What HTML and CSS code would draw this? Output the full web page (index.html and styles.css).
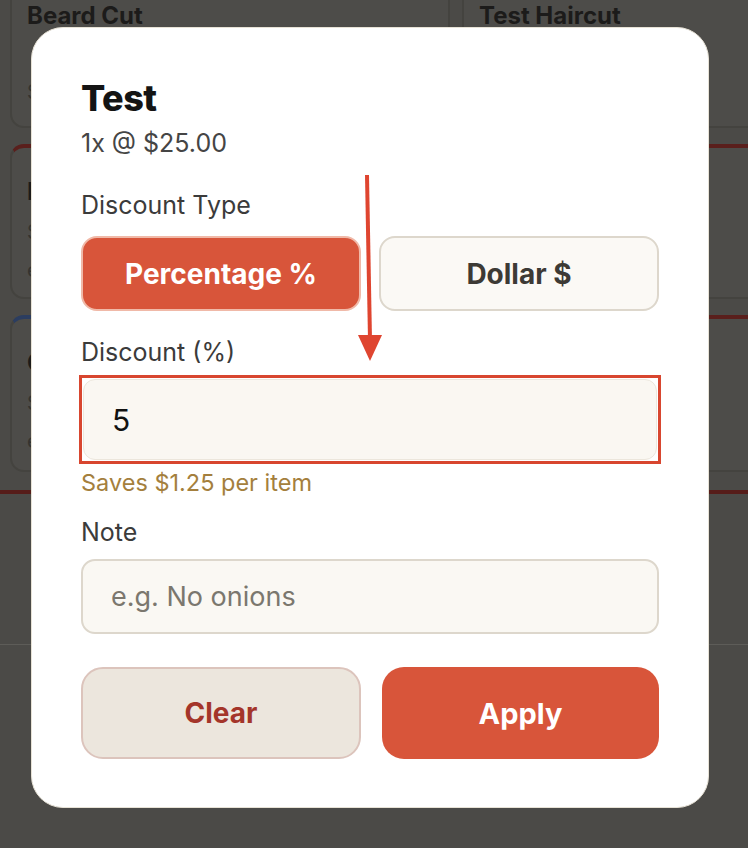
FILE: index.html
```html
<!DOCTYPE html>
<html lang="en">
<head>
<meta charset="utf-8">
<title>Discount</title>
<link rel="stylesheet" href="styles.css">
</head>
<body>
<div class="bg">
  <div class="grid">
    <div class="card first"><div class="card-name">Beard Cut</div><div class="card-line">$30</div></div>
    <div class="card first"><div class="card-name">Test Haircut</div><div class="card-line">$25</div></div>
    <div class="card red"><div class="card-name">Itm</div><div class="card-line">$20</div><div class="card-line">edit</div></div>
    <div class="card red"><div class="card-name">Item</div><div class="card-line">$20</div></div>
    <div class="card blue"><div class="card-name">Col</div><div class="card-line">$40</div><div class="card-line">edit</div></div>
    <div class="card red"><div class="card-name">Item</div><div class="card-line">$15</div></div>
  </div>
  <div class="panel"></div>
</div>

<div class="modal">
  <h1 class="title">Test</h1>
  <div class="sub">1x @ $25.00</div>

  <div class="label label-type">Discount Type</div>
  <div class="toggle">
    <button class="tbtn active">Percentage %</button>
    <button class="tbtn">Dollar $</button>
  </div>

  <div class="label label-disc">Discount (%)</div>
  <div class="hl">
    <div class="field value">5</div>
  </div>
  <div class="saves">Saves $1.25 per item</div>

  <div class="label label-note">Note</div>
  <div class="field note">e.g. No onions</div>

  <div class="actions">
    <button class="abtn clear">Clear</button>
    <button class="abtn apply">Apply</button>
  </div>
</div>

<svg class="arrow" width="748" height="848" viewBox="0 0 748 848">
  <line x1="367" y1="175" x2="370" y2="340" stroke="#df4530" stroke-width="4"/>
  <polygon points="358,335 382,335 370,361" fill="#df4530"/>
</svg>
</body>
</html>
```

FILE: styles.css
```css
* { box-sizing: border-box; }
html, body { margin: 0; padding: 0; }
body {
  width: 748px;
  height: 848px;
  overflow: hidden;
  background: #4b4a47;
  font-family: Inter, "Noto Sans", sans-serif;
  position: relative;
}

/* dimmed background app */
.bg { width: 748px; overflow: hidden; }
.grid {
  display: grid;
  grid-template-columns: 440px 440px;
  grid-template-rows: 158px 155px 157px;
  gap: 16px 12px;
  padding-left: 10px;
  margin-top: -30px;
}
.card {
  background: #4d4c49;
  border: 2px solid #44433f;
  border-radius: 14px;
  padding: 30px 15px 0;
  display: flex;
  flex-direction: column;
  gap: 14px;
}
.card.first { padding-top: 30px; gap: 50px; }
.card.red { border-top: 4px solid #5a1f1c; }
.card.blue { border-top: 4px solid #2b3d60; }
.card-name { font-weight: 700; font-size: 24px; color: #1c1b1a; line-height: 28px; }
.card-line { font-size: 20px; color: #34332f; }
.panel {
  margin-top: 18px;
  height: 155px;
  border-top: 4px solid #561c19;
  border-bottom: 1px solid #5d5c58;
}

/* modal */
.modal {
  position: absolute;
  left: 31px;
  top: 27px;
  width: 678px;
  height: 781px;
  background: #ffffff;
  border: 1px solid #e7e2d6;
  border-radius: 32px;
  padding: 48px 49px 0;
  display: flex;
  flex-direction: column;
}
.title {
  margin: 0;
  font-size: 36px;
  line-height: 44px;
  font-weight: 800;
  color: #141414;
  letter-spacing: -0.5px;
}
.sub {
  margin-top: 7px;
  font-size: 25px;
  line-height: 32px;
  color: #454545;
}
.label {
  font-size: 25px;
  line-height: 32px;
  color: #3b3b3b;
}
.label-type { margin-top: 30px; }
.label-disc { margin-top: 25px; }
.label-note { margin-top: 18px; }

.toggle {
  margin-top: 15px;
  display: grid;
  grid-template-columns: 1fr 1fr;
  gap: 18px;
}
.tbtn {
  height: 75px;
  border-radius: 16px;
  border: 2px solid #ddd7cc;
  background: #fbf9f5;
  color: #3d3a35;
  font-family: inherit;
  font-weight: 700;
  font-size: 28px;
}
.tbtn.active {
  background: #d8553a;
  border-color: #f0b9a8;
  color: #ffffff;
}

.hl {
  margin: 7px -2px 0;
  border: 3px solid #d8462f;
  padding: 1px;
}
.field {
  border-radius: 14px;
  border: 2px solid #ddd7cc;
  background: #faf8f3;
  display: flex;
  align-items: center;
  padding-left: 28px;
}
.value {
  height: 81px;
  border: 1px solid #ece6dc;
  border-radius: 12px;
  background: #faf7f2;
  font-size: 30px;
  color: #111111;
  padding-left: 28px;
}
.saves {
  margin-top: 4px;
  font-size: 23.5px;
  line-height: 30px;
  color: #a47f3d;
}
.note {
  margin-top: 11px;
  height: 75px;
  font-size: 27px;
  color: #7b776e;
}
.actions {
  margin-top: 33px;
  display: grid;
  grid-template-columns: 280px 277px;
  justify-content: space-between;
}
.abtn {
  height: 92px;
  border-radius: 22px;
  font-family: inherit;
  font-weight: 700;
  font-size: 28px;
}
.clear {
  background: #ece6dd;
  border: 2px solid #dcc4bc;
  color: #a4352a;
}
.apply {
  background: #d8553a;
  border: none;
  color: #ffffff;
  font-size: 29px;
}

.arrow {
  position: absolute;
  left: 0;
  top: 0;
  pointer-events: none;
}
```
